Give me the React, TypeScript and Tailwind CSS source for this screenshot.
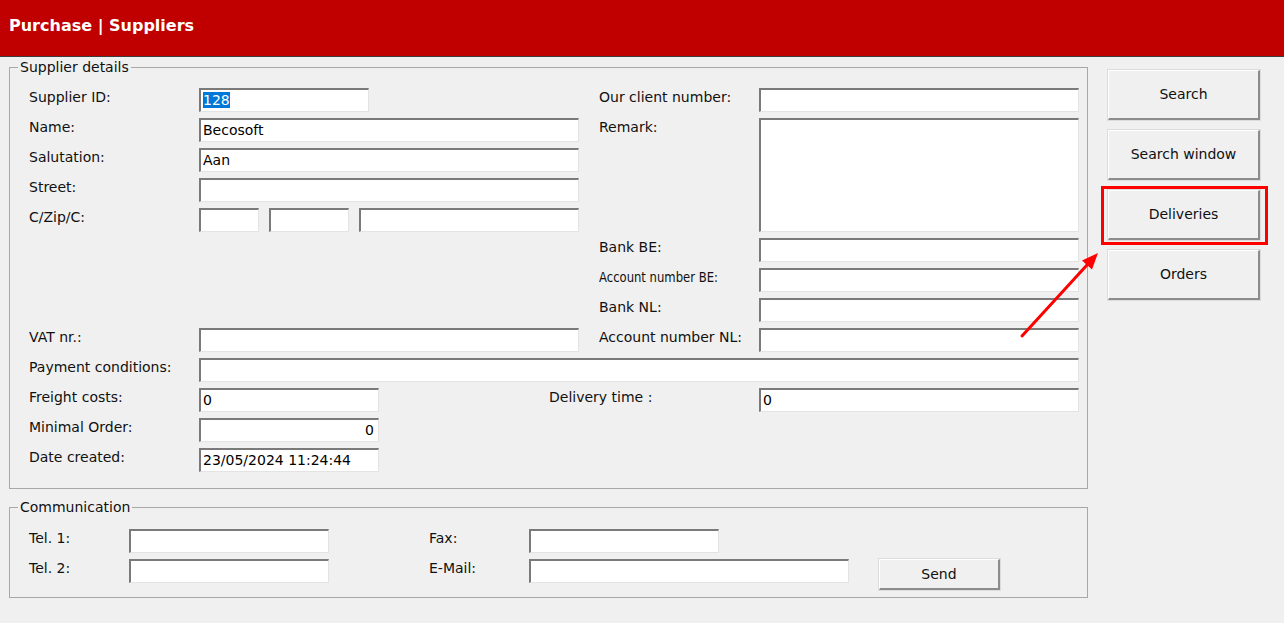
import React from 'react';

const font = { fontFamily: '"DejaVu Sans", Verdana, sans-serif' };

// sunken edit box, like a classic Win32 textbox
function Field({
  w,
  h = 'h-[24px]',
  value,
  right,
  children,
}: {
  w: string;
  h?: string;
  value?: string;
  right?: boolean;
  children?: React.ReactNode;
}) {
  return (
    <div
      className={`${w} ${h} shrink-0 bg-white border-t-2 border-l-2 border-t-[#7a7a7a] border-l-[#7a7a7a] border-b border-r border-b-[#e3e3e3] border-r-[#e3e3e3] px-[2px] text-[14px] leading-[20px] text-black overflow-hidden whitespace-nowrap ${
        right ? 'text-right pr-[4px]' : ''
      }`}
    >
      {children ?? value}
    </div>
  );
}

function Label({ w, children }: { w: string; children: React.ReactNode }) {
  return <div className={`${w} shrink-0 text-[14px] leading-[18px] text-[#111] whitespace-nowrap`}>{children}</div>;
}

function Row({ children }: { children: React.ReactNode }) {
  return <div className="flex items-start h-[24px]">{children}</div>;
}

function WinButton({ children, className = '' }: { children: React.ReactNode; className?: string }) {
  return (
    <button
      className={`bg-[#f0f0f0] border-t border-l border-t-white border-l-white border-b-2 border-r-2 border-b-[#8c8c8c] border-r-[#8c8c8c] shadow-[0_0_0_1px_#dcdcdc] text-[14px] text-[#111] ${className}`}
    >
      {children}
    </button>
  );
}

export default function App() {
  const buttons = ['Search', 'Search window', 'Deliveries', 'Orders'];

  return (
    <div className="relative min-h-screen bg-[#f0f0f0]" style={font}>
      <header className="h-[57px] bg-[#c00000] border-b border-[#3c3c3c] flex items-center pl-[9px] pb-[5px]">
        <h1 className="text-white font-bold text-[16px]">Purchase | Suppliers</h1>
      </header>

      <div className="flex pl-[9px]">
        <div className="w-[1079px] shrink-0">
          {/* Supplier details */}
          <fieldset className="mt-[1px] border border-[#a8a8a8] px-[8px] pt-[12px] pb-[16px]">
            <legend className="px-[2px] text-[14px] leading-[18px] text-[#111]">Supplier details</legend>
            <div className="pl-[11px] flex flex-col gap-[6px]">
              <div className="flex gap-[20px]">
                <div className="w-[550px] flex flex-col gap-[6px]">
                  <Row>
                    <Label w="w-[170px]">Supplier ID:</Label>
                    <Field w="w-[170px]">
                      <span className="bg-[#0078d7] text-white">128</span>
                    </Field>
                  </Row>
                  <Row>
                    <Label w="w-[170px]">Name:</Label>
                    <Field w="w-[380px]" value="Becosoft" />
                  </Row>
                  <Row>
                    <Label w="w-[170px]">Salutation:</Label>
                    <Field w="w-[380px]" value="Aan" />
                  </Row>
                  <Row>
                    <Label w="w-[170px]">Street:</Label>
                    <Field w="w-[380px]" />
                  </Row>
                  <Row>
                    <Label w="w-[170px]">C/Zip/C:</Label>
                    <div className="flex gap-[10px]">
                      <Field w="w-[60px]" />
                      <Field w="w-[80px]" />
                      <Field w="w-[220px]" />
                    </div>
                  </Row>
                  <div className="h-[84px]" />
                  <Row>
                    <Label w="w-[170px]">VAT nr.:</Label>
                    <Field w="w-[380px]" />
                  </Row>
                </div>

                <div className="w-[480px] flex flex-col gap-[6px]">
                  <Row>
                    <Label w="w-[160px]">Our client number:</Label>
                    <Field w="w-[320px]" />
                  </Row>
                  <div className="flex items-start h-[114px]">
                    <Label w="w-[160px]">Remark:</Label>
                    <Field w="w-[320px]" h="h-[114px]" />
                  </div>
                  <Row>
                    <Label w="w-[160px]">Bank BE:</Label>
                    <Field w="w-[320px]" />
                  </Row>
                  <Row>
                    <Label w="w-[160px]">
                      <span className="inline-block origin-left [transform:scaleX(0.83)]">Account number BE:</span>
                    </Label>
                    <Field w="w-[320px]" />
                  </Row>
                  <Row>
                    <Label w="w-[160px]">Bank NL:</Label>
                    <Field w="w-[320px]" />
                  </Row>
                  <Row>
                    <Label w="w-[160px]">Account number NL:</Label>
                    <Field w="w-[320px]" />
                  </Row>
                </div>
              </div>

              <Row>
                <Label w="w-[170px]">Payment conditions:</Label>
                <Field w="w-[880px]" />
              </Row>
              <Row>
                <Label w="w-[170px]">Freight costs:</Label>
                <Field w="w-[180px]" value="0" />
                <div className="w-[170px]" />
                <Label w="w-[210px]">Delivery time :</Label>
                <Field w="w-[320px]" value="0" />
              </Row>
              <Row>
                <Label w="w-[170px]">Minimal Order:</Label>
                <Field w="w-[180px]" value="0" right />
              </Row>
              <Row>
                <Label w="w-[170px]">Date created:</Label>
                <Field w="w-[180px]" value="23/05/2024 11:24:44" />
              </Row>
            </div>
          </fieldset>

          {/* Communication */}
          <fieldset className="mt-[9px] border border-[#a8a8a8] px-[8px] pt-[13px] pb-[7px]">
            <legend className="px-[2px] text-[14px] leading-[18px] text-[#111]">Communication</legend>
            <div className="pl-[11px] flex flex-col gap-[6px]">
              <Row>
                <Label w="w-[100px]">Tel. 1:</Label>
                <Field w="w-[200px]" />
                <div className="w-[100px]" />
                <Label w="w-[100px]">Fax:</Label>
                <Field w="w-[190px]" />
              </Row>
              <div className="flex items-start">
                <Label w="w-[100px]">Tel. 2:</Label>
                <Field w="w-[200px]" />
                <div className="w-[100px]" />
                <Label w="w-[100px]">E-Mail:</Label>
                <Field w="w-[320px]" />
                <WinButton className="ml-[30px] w-[121px] h-[31px]">Send</WinButton>
              </div>
            </div>
          </fieldset>
        </div>

        {/* action buttons */}
        <div className="ml-[20px] pt-[13px] flex flex-col gap-[10px]">
          {buttons.map((b) => (
            <WinButton key={b} className="w-[152px] h-[50px]">
              {b}
            </WinButton>
          ))}
        </div>
      </div>

      {/* annotation: highlight + arrow */}
      <svg className="absolute left-0 top-0 pointer-events-none" width="1284" height="623">
        <rect x="1102.5" y="187.5" width="164" height="56" fill="none" stroke="#ff0000" strokeWidth="3" />
        <line x1="1022" y1="336" x2="1087" y2="265" stroke="#ff0000" strokeWidth="3" strokeLinecap="round" />
        <polygon points="1098,253 1092,269.5 1082,260.5" fill="#ff0000" />
      </svg>
    </div>
  );
}
